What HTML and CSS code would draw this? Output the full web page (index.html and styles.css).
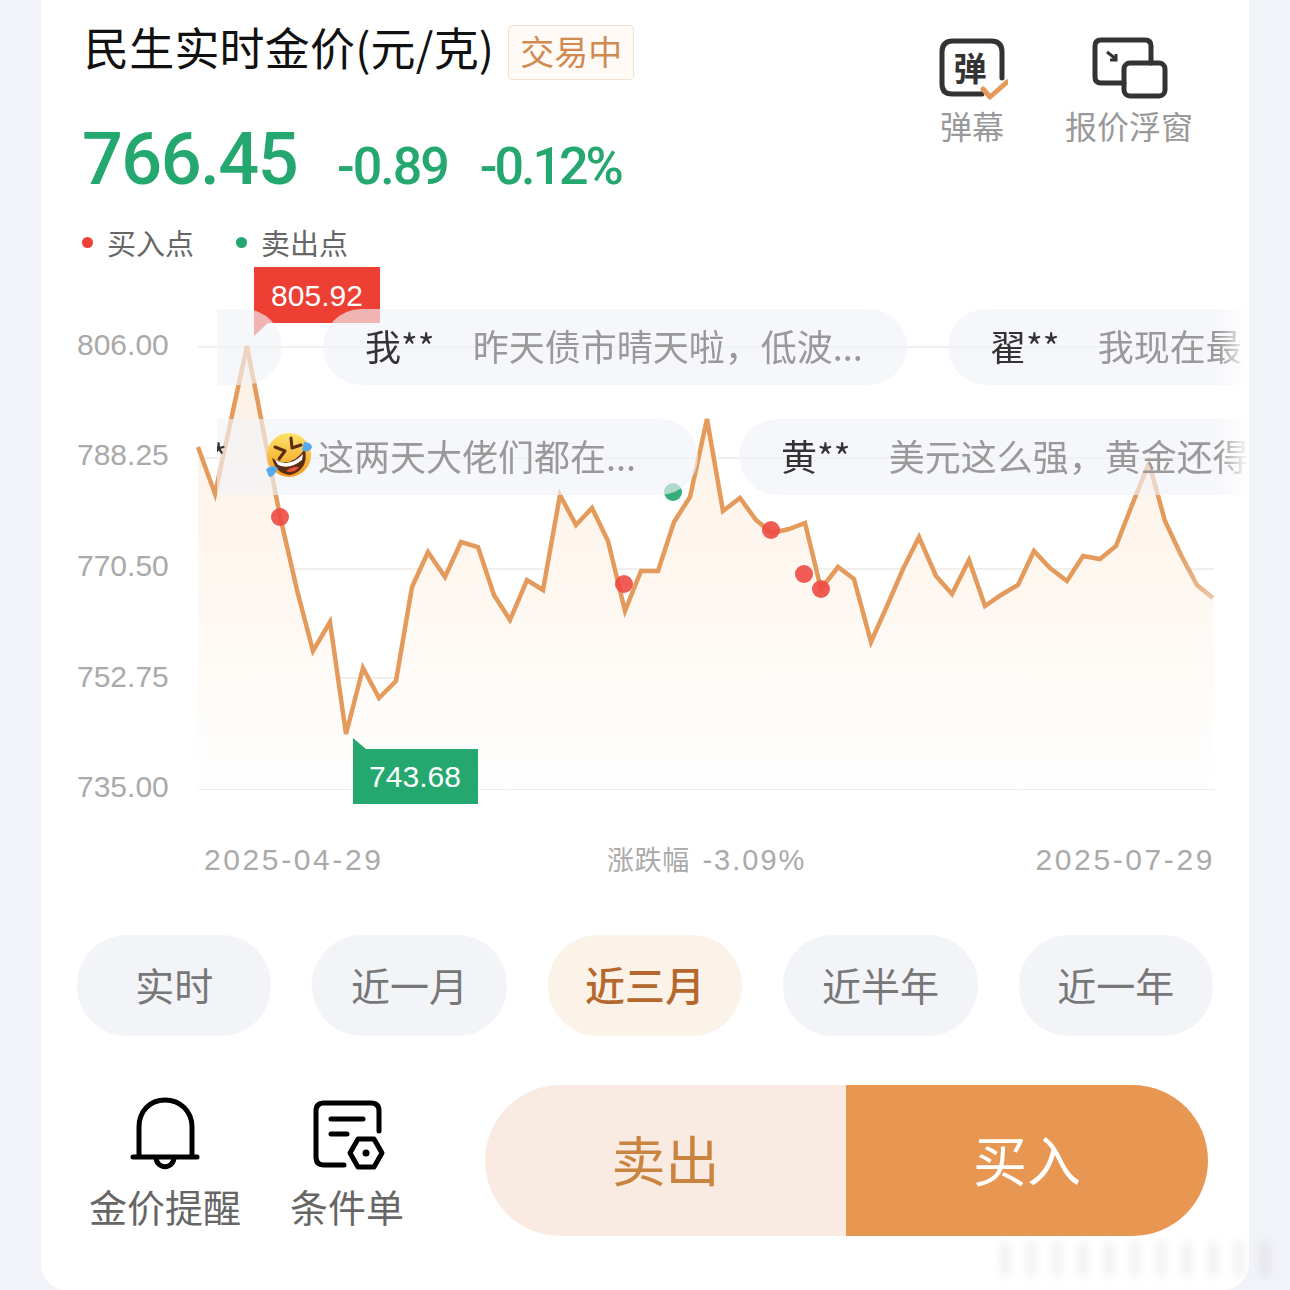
FILE: index.html
```html
<!DOCTYPE html>
<html lang="zh-CN">
<head>
<meta charset="utf-8">
<title>民生实时金价</title>
<link rel="stylesheet" href="styles.css">
</head>
<body>
<main class="card">
  <header class="head">
    <div class="summary">
      <div class="title-row">
        <h1 class="title">民生实时金价(元/克)</h1>
        <span class="badge">交易中</span>
      </div>
      <div class="price-row">
        <span class="price">766.45</span>
        <span class="delta delta-abs">-0.89</span>
        <span class="delta">-0.12%</span>
      </div>
      <div class="legend">
        <span class="legend-item"><i class="dot dot-buy"></i>买入点</span>
        <span class="legend-item"><i class="dot dot-sell"></i>卖出点</span>
      </div>
    </div>
    <div class="tools">
      <div class="tool">
        <svg class="tool-icon-a" viewBox="936 34 72 70" aria-hidden="true">
          <path class="ico-dark" d="M982 94H952Q942 94 942 84V52Q942 41 953 41H991Q1002 41 1002 52V78"/>
          <path class="ico-check" d="M983 89L990 97L1007 82"/>
        </svg>
        <span class="glyph-dan">弹</span>
        <span class="tool-label">弹幕</span>
      </div>
      <div class="tool">
        <svg class="tool-icon-b" viewBox="1089 34 80 70" aria-hidden="true">
          <path class="ico-dark" d="M1124 83H1101Q1095 83 1095 77V46Q1095 40 1101 40H1145Q1151 40 1151 46V63"/>
          <rect class="ico-dark" x="1124" y="63" width="41" height="33" rx="6"/>
          <path class="ico-arrow" d="M1107 52L1116 59M1116 54V60H1110"/>
        </svg>
        <span class="tool-label">报价浮窗</span>
      </div>
    </div>
  </header>

  <section class="chart">
    <svg class="plot" viewBox="41 267 1208 630" aria-label="金价走势图">
      <defs>
        <linearGradient id="areaFill" x1="0" y1="0" x2="0" y2="1">
          <stop offset="0" stop-color="#fdf0e3"/>
          <stop offset="0.6" stop-color="#fef8f2"/>
          <stop offset="1" stop-color="#ffffff"/>
        </linearGradient>
        <linearGradient id="lineFade" gradientUnits="userSpaceOnUse" x1="198" y1="0" x2="1213" y2="0">
          <stop offset="0" stop-color="#e39a5b"/>
          <stop offset="0.96" stop-color="#e39a5b"/>
          <stop offset="1" stop-color="#ecc6a6"/>
        </linearGradient>
      </defs>
      <g class="grid">
        <line x1="198" x2="1214" y1="347" y2="347"/>
        <line x1="198" x2="1214" y1="458" y2="458"/>
        <line x1="198" x2="1214" y1="569" y2="569"/>
        <line x1="198" x2="1214" y1="678" y2="678"/>
        <line x1="198" x2="1214" y1="789" y2="789"/>
      </g>
      <g class="axis">
        <text x="77" y="355">806.00</text>
        <text x="77" y="465">788.25</text>
        <text x="77" y="576">770.50</text>
        <text x="77" y="687">752.75</text>
        <text x="77" y="797">735.00</text>
      </g>
      <polygon fill="url(#areaFill)" points="198,789 198,447 215,494 231,420 247,346 264,434 280,516 297,590 313,651 330,622 346,734 363,668 379,698 396,681 412,587 428,552 445,577 461,542 478,547 494,595 510,620 527,580 543,590 560,495 576,525 592,508 608,541 625,611 641,571 658,571 674,522 690,497 707,419 723,511 740,498 756,520 772,533 789,529 805,523 821,589 838,567 854,579 871,642 887,606 903,569 919,537 936,576 952,594 969,560 985,606 1001,595 1018,585 1034,551 1050,568 1067,581 1083,556 1100,559 1116,546 1132,505 1149,463 1165,521 1181,555 1197,585 1213,598 1213,789"/>
      <polyline class="line" stroke="url(#lineFade)" points="198,447 215,494 231,420 247,346 264,434 280,516 297,590 313,651 330,622 346,734 363,668 379,698 396,681 412,587 428,552 445,577 461,542 478,547 494,595 510,620 527,580 543,590 560,495 576,525 592,508 608,541 625,611 641,571 658,571 674,522 690,497 707,419 723,511 740,498 756,520 772,533 789,529 805,523 821,589 838,567 854,579 871,642 887,606 903,569 919,537 936,576 952,594 969,560 985,606 1001,595 1018,585 1034,551 1050,568 1067,581 1083,556 1100,559 1116,546 1132,505 1149,463 1165,521 1181,555 1197,585 1213,598"/>
      <g class="pt-buy">
        <circle cx="280" cy="517" r="9"/>
        <circle cx="624" cy="584" r="9"/>
        <circle cx="771" cy="530" r="9"/>
        <circle cx="804" cy="574" r="9"/>
        <circle cx="821" cy="589" r="9"/>
      </g>
      <circle class="pt-sell" cx="673" cy="492" r="9"/>
      <path class="tag-red" d="M254 267H380V323H268L254 336Z"/>
      <text class="tag-text" x="317" y="306">805.92</text>
      <path class="tag-green" d="M353 738L366 749H478V804H353Z"/>
      <text class="tag-text" x="415" y="787">743.68</text>
      <text class="date" x="204" y="870">2025-04-29</text>
      <text class="change" x="607" y="870">涨跌幅 <tspan class="change-num" dx="6">-3.09%</tspan></text>
      <text class="date date-end" x="1215" y="870">2025-07-29</text>
    </svg>

    <div class="danmaku">
      <div class="dm-row">
        <div class="pill pill-stub"></div>
        <div class="pill pill-a"><span class="dm-name">我**</span><span class="dm-msg">昨天债市晴天啦，低波...</span></div>
        <div class="pill pill-open"><span class="dm-name">翟**</span><span class="dm-msg">我现在最</span></div>
      </div>
      <div class="dm-row">
        <div class="pill pill-b">
          <span class="dm-name">*</span>
          <svg class="emoji" viewBox="0 0 46 46" aria-hidden="true">
            <defs>
              <linearGradient id="face" x1="0" y1="0" x2="0" y2="1">
                <stop offset="0" stop-color="#fde268"/>
                <stop offset="1" stop-color="#f39a1f"/>
              </linearGradient>
            </defs>
            <circle cx="23" cy="23" r="22" fill="url(#face)"/>
            <path d="M6 26Q24 38 39 17Q43 38 24 43Q10 42 6 26Z" fill="#5b2c12"/>
            <path d="M9 28Q24 36 37 22L36 28Q24 38 12 33Z" fill="#ffffff"/>
            <path d="M20 39Q27 34 33 35Q28 42 20 39Z" fill="#e8543a"/>
            <path class="eye" d="M9 15L19 19L13 27M25 6L26 16L35 13"/>
            <path d="M0 37Q7 32 12 36Q8 45 3 45Z" fill="#55a9ee"/>
            <path d="M38 10Q46 10 46 16Q41 22 36 18Z" fill="#55a9ee"/>
          </svg>
          <span class="dm-msg">这两天大佬们都在...</span>
        </div>
        <div class="pill pill-open"><span class="dm-name">黄**</span><span class="dm-msg">美元这么强，黄金还得</span></div>
      </div>
    </div>
  </section>

  <nav class="ranges">
    <button class="range">实时</button>
    <button class="range">近一月</button>
    <button class="range range-on">近三月</button>
    <button class="range">近半年</button>
    <button class="range">近一年</button>
  </nav>

  <div class="actions">
    <div class="action">
      <svg class="action-icon" viewBox="125 1094 80 80" aria-hidden="true">
        <path class="ico-black" d="M139 1157V1127C139 1111 150 1100 165 1100C180 1100 192 1111 192 1127V1157M133 1157H197M156 1157C156 1170 174 1170 174 1157"/>
      </svg>
      <span class="action-label">金价提醒</span>
    </div>
    <div class="action">
      <svg class="action-icon" viewBox="307 1094 80 80" aria-hidden="true">
        <path class="ico-black" d="M344 1165H324Q316 1165 316 1157V1111Q316 1103 324 1103H371Q379 1103 379 1111V1131M331 1119H363M331 1134H347"/>
        <path class="ico-black" d="M358 1139H374L382 1153L374 1167H358L350 1153Z"/>
        <circle cx="366" cy="1153" r="3.5" fill="#000"/>
      </svg>
      <span class="action-label">条件单</span>
    </div>
    <div class="trade">
      <button class="trade-btn trade-sell">卖出</button>
      <button class="trade-btn trade-buy">买入</button>
    </div>
  </div>
</main>
<div class="watermark"></div>
</body>
</html>
```

FILE: styles.css
```css
* { box-sizing: border-box; }
html, body { margin: 0; padding: 0; }
body {
  position: relative;
  width: 1290px;
  height: 1290px;
  overflow: hidden;
  background: #f2f3f8;
  font-family: "Noto Sans CJK SC", "Noto Sans", sans-serif;
}
.card {
  width: 1208px;
  height: 1290px;
  margin-left: 41px;
  background: #fff;
  border-radius: 0 0 26px 26px;
  overflow: hidden;
}

/* header */
.head {
  height: 267px;
  display: flex;
  justify-content: space-between;
}
.summary { padding: 25px 0 0 41px; }
.title-row { display: flex; align-items: center; height: 55px; gap: 14px; }
.title {
  margin: 0 0 12px 2px;
  font-size: 45px;
  letter-spacing: 0.2px;
  font-weight: 400;
  color: #111;
  line-height: 47px;
  white-space: nowrap;
}
.badge {
  height: 55px;
  padding: 0 11px;
  font-size: 34px;
  line-height: 50px;
  color: #d08a50;
  background: #fffaf6;
  border: 1.5px solid #f4dfcc;
  border-radius: 4px;
  white-space: nowrap;
}
.price-row {
  display: flex;
  align-items: baseline;
  height: 80px;
  margin-top: 41px;
  font-family: Roboto, "Liberation Sans", sans-serif;
  color: #24a86f;
}
.price { font-size: 72px; font-weight: 500; line-height: 78px; letter-spacing: -1.6px; margin-right: 40px; }
.delta { font-size: 52px; font-weight: 500; line-height: 78px; margin-right: 34px; letter-spacing: -3px; }
.delta-abs { letter-spacing: -2px; margin-right: 32px; }
.legend { display: flex; gap: 42px; margin-top: 19px; }
.legend-item {
  display: flex;
  align-items: center;
  gap: 14px;
  font-size: 29px;
  line-height: 44px;
  color: #666;
}
.dot { width: 11px; height: 11px; border-radius: 50%; display: block; }
.dot-buy { background: #ee3f34; }
.dot-sell { background: #24a86f; }

.tools { display: flex; gap: 57px; padding: 34px 56px 0 0; align-items: flex-start; }
.tool { position: relative; display: flex; flex-direction: column; align-items: center; }
.tool-icon-a { width: 72px; height: 70px; display: block; }
.tool-icon-b { width: 80px; height: 70px; display: block; }
.tool-label { font-size: 32px; line-height: 42px; color: #999; white-space: nowrap; }
.glyph-dan {
  position: absolute;
  left: 0;
  right: 4px;
  top: 10px;
  text-align: center;
  font-size: 33px;
  line-height: 46px;
  font-weight: 700;
  color: #333;
}
.ico-dark { fill: none; stroke: #333; stroke-width: 5; stroke-linecap: round; }
.ico-check { fill: none; stroke: #e39a5b; stroke-width: 5; stroke-linecap: round; stroke-linejoin: round; }
.ico-arrow { fill: none; stroke: #333; stroke-width: 3; }
.ico-black { fill: none; stroke: #000; stroke-width: 5; stroke-linecap: round; stroke-linejoin: round; }

/* chart */
.chart { position: relative; height: 630px; }
.plot { display: block; width: 1208px; height: 630px; }
.grid line { stroke: #f1efee; stroke-width: 2; }
.axis text { font-family: "Liberation Sans", sans-serif; font-size: 30px; fill: #aaa; }
.line { fill: none; stroke-width: 4.5; stroke-linejoin: miter; }
.pt-buy circle { fill: #ee4a44; fill-opacity: 0.9; }
.pt-sell { fill: #34ad7a; }
.tag-red { fill: #ee3f34; }
.tag-green { fill: #24a86f; }
.tag-text { font-family: "Liberation Sans", sans-serif; font-size: 30px; fill: #fff; text-anchor: middle; }
.date { font-family: "Liberation Sans", sans-serif; font-size: 30px; letter-spacing: 2.6px; fill: #aaa; }
.date-end { text-anchor: end; }
.change { font-family: "Noto Sans CJK SC", sans-serif; font-size: 27px; letter-spacing: 0.6px; fill: #aaa; }
.change-num { font-family: "Liberation Sans", sans-serif; font-size: 29px; letter-spacing: 2px; }

/* danmaku over the chart */
.danmaku {
  position: absolute;
  left: 176px;
  top: 42px;
  width: 1032px;
  height: 186px;
  overflow: hidden;
  display: flex;
  flex-direction: column;
  gap: 34px;
  -webkit-mask-image: linear-gradient(to right, #000 97%, transparent 100%);
  mask-image: linear-gradient(to right, #000 97%, transparent 100%);
}
.dm-row { display: flex; gap: 41px; height: 76px; }
.pill {
  flex: none;
  display: flex;
  align-items: center;
  gap: 38px;
  height: 76px;
  padding: 0 42px 4px;
  border-radius: 38px;
  background: rgba(241, 243, 247, 0.65);
  white-space: nowrap;
}
.pill-stub { width: 200px; margin-left: -135px; }
.pill-a { width: 584px; }
.pill-open { padding-right: 120px; }
.pill-b {
  width: 600px;
  margin-left: -119px;
  justify-content: flex-end;
  gap: 6px;
  padding-right: 62px;
}
.dm-name { font-size: 36px; color: #333; }
.dm-msg { font-size: 36px; color: #999; }
.pill-b .dm-name { margin-right: 33px; }
.emoji { width: 46px; height: 46px; display: block; flex: none; }
.eye { fill: none; stroke: #5b2c12; stroke-width: 3; stroke-linecap: round; stroke-linejoin: round; }

/* range tabs */
.ranges {
  display: flex;
  gap: 41px;
  height: 101px;
  margin: 38px 36px 0;
}
.range {
  flex: 1 1 0;
  border: 0;
  border-radius: 50px;
  padding: 0 0 4px;
  background: #f3f4f8;
  font-family: inherit;
  font-size: 39px;
  color: #777;
}
.range-on { background: #fbf2e8; color: #b5682e; font-size: 40px; font-weight: 500; }

/* bottom actions */
.actions { display: flex; height: 151px; margin-top: 49px; padding-left: 48px; }
.action {
  display: flex;
  flex-direction: column;
  align-items: center;
  margin-right: 49px;
  padding-top: 9px;
}
.action-icon { width: 80px; height: 80px; display: block; }
.action-label { font-size: 38px; line-height: 48px; margin-top: 8px; color: #666; white-space: nowrap; }
.trade {
  display: flex;
  width: 723px;
  height: 151px;
  margin-left: 32px;
  border-radius: 76px;
  overflow: hidden;
}
.trade-btn {
  border: 0;
  padding: 0 0 5px;
  font-family: inherit;
  font-size: 54px;
}
.trade-sell { width: 361px; background: #f9ebe1; color: #c9843f; }
.trade-buy { flex: 1; background: #e89753; color: #fff; }

/* blurred watermark in the corner */
.watermark {
  position: absolute;
  left: 1000px;
  top: 1242px;
  width: 282px;
  height: 34px;
  background: repeating-linear-gradient(to right, rgba(120, 120, 120, 0.1) 0 10px, transparent 10px 26px);
  filter: blur(4px);
}
```
